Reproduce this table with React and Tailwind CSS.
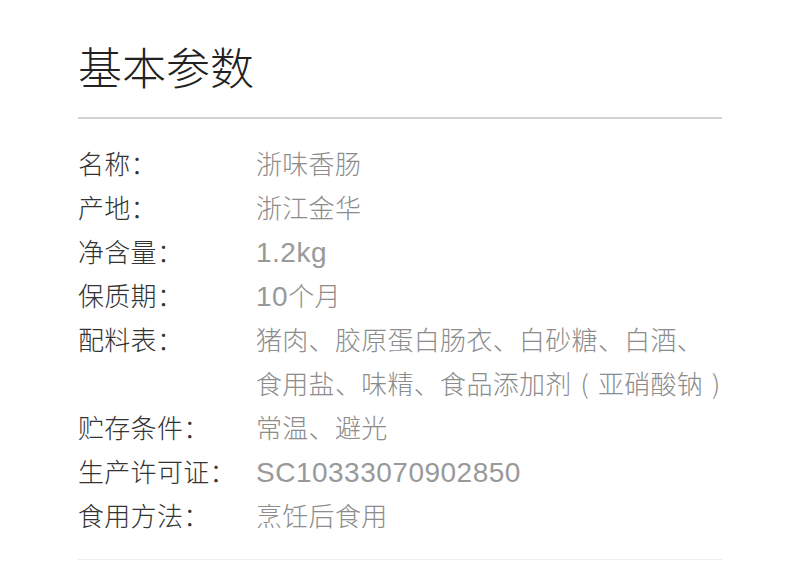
import React from 'react';

// latin runs are set in a wider face, like the reference's Helvetica-style digits
const Latin = ({ children }) => (
    <span className="font-['Liberation_Sans',sans-serif] text-[28px] tracking-[0.5px] text-[#999]">{children}</span>
);

// full-width bracket with the glyph centred in its em box
const Paren = ({ children }) => (
    <span className="inline-block w-[26.3px] text-center">{children}</span>
);

const specs = [
    { label: '名称：', value: ['浙味香肠'] },
    { label: '产地：', value: ['浙江金华'] },
    { label: '净含量：', value: [<Latin>1.2kg</Latin>] },
    { label: '保质期：', value: [<><Latin>10</Latin>个月</>] },
    { label: '配料表：', value: ['猪肉、胶原蛋白肠衣、白砂糖、白酒、', <>食用盐、味精、食品添加剂<Paren>(</Paren>亚硝酸钠<Paren>)</Paren></>] },
    { label: '贮存条件：', value: ['常温、避光'] },
    { label: '生产许可证：', value: [<Latin>SC10333070902850</Latin>] },
    { label: '食用方法：', value: ['烹饪后食用'] },
];

export default function App() {
    return (
        <div className="w-[790px] h-[577px] bg-white overflow-hidden font-['Noto_Sans_CJK_SC','Noto_Sans',sans-serif]">
            <div className="mx-[78px] w-[644px]">
                {/* Title */}
                <h1 className="pt-[36px] pb-[21px] text-[44px] leading-[60px] text-[#222] font-light">基本参数</h1>
                <div className="h-[2px] bg-[#d4d4d4]"></div>

                {/* Rows */}
                <div className="pt-[22px] pb-[22px] flex flex-col font-light">
                    {specs.map((row, i) => (
                        <div key={i} className="flex text-[26px] leading-[44px] tracking-[0.3px]">
                            <div className="w-[178px] shrink-0 text-[#333]">{row.label}</div>
                            <div className="flex-1 text-[#8c8c8c]">
                                {row.value.map((line, j) => (
                                    <div key={j} className="whitespace-nowrap h-[44px]">{line}</div>
                                ))}
                            </div>
                        </div>
                    ))}
                </div>
                <div className="h-px bg-[#eeeeee]"></div>
            </div>
        </div>
    );
}
